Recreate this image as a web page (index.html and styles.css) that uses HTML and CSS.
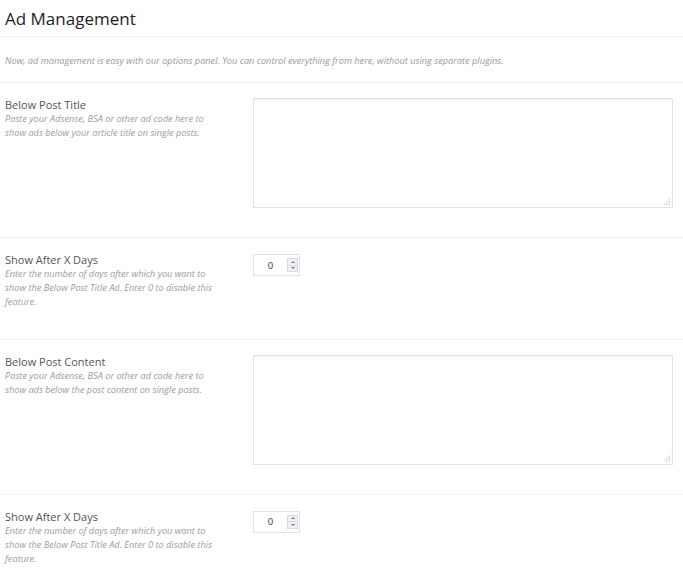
FILE: index.html
```html
<!DOCTYPE html>
<html lang="en">
<head>
<meta charset="UTF-8">
<title>Ad Management</title>
<link rel="stylesheet" href="styles.css">
</head>
<body>
<div class="panel">
    <h2>Ad Management</h2>
    <p class="intro">Now, ad management is easy with our options panel. You can control everything from here, without using separate plugins.</p>

    <div class="row">
        <div class="info">
            <label>Below Post Title</label>
            <p class="desc">Paste your Adsense, BSA or other ad code here to show ads below your article title on single posts.</p>
        </div>
        <div class="field">
            <textarea name="below_title"></textarea>
        </div>
    </div>

    <div class="row">
        <div class="info">
            <label>Show After X Days</label>
            <p class="desc">Enter the number of days after which you want to show the Below Post Title Ad. Enter 0 to disable this feature.</p>
        </div>
        <div class="field">
            <div class="number">
                <input type="text" name="title_days" value="0">
                <span class="spin"><i class="up"></i><i class="down"></i></span>
            </div>
        </div>
    </div>

    <div class="row">
        <div class="info">
            <label>Below Post Content</label>
            <p class="desc">Paste your Adsense, BSA or other ad code here to show ads below the post content on single posts.</p>
        </div>
        <div class="field">
            <textarea name="below_content"></textarea>
        </div>
    </div>

    <div class="row">
        <div class="info">
            <label>Show After X Days</label>
            <p class="desc">Enter the number of days after which you want to show the Below Post Title Ad. Enter 0 to disable this feature.</p>
        </div>
        <div class="field">
            <div class="number">
                <input type="text" name="content_days" value="0">
                <span class="spin"><i class="up"></i><i class="down"></i></span>
            </div>
        </div>
    </div>
</div>
</body>
</html>
```

FILE: styles.css
```css
body {
    margin: 0;
    background: #fff;
    font-family: "Open Sans", "Liberation Sans", Arial, sans-serif;
    color: #555;
}
.panel {
    width: 683px;
}
h2 {
    margin: 0;
    padding: 7px 5px 0;
    height: 29px;
    font-size: 17px;
    font-weight: 400;
    color: #1e1e1e;
    border-bottom: 1px solid #eee;
}
.intro {
    margin: 0;
    padding: 17px 5px 0;
    height: 28px;
    font-size: 9.2px;
    font-style: italic;
    color: #999;
    border-bottom: 1px solid #eee;
}
.row {
    display: flex;
    padding: 15px 0 29px 5px;
    border-bottom: 1px solid #eee;
}
.row:last-child {
    border-bottom: 0;
}
.info {
    width: 212px;
    margin-right: 36px;
}
label {
    display: block;
    font-size: 11px;
    line-height: 14px;
    color: #555;
}
.desc {
    margin: 0;
    font-size: 9.2px;
    line-height: 14.2px;
    font-style: italic;
    color: #9c9c9c;
}
.field {
    position: relative;
}
textarea {
    display: block;
    width: 420px;
    height: 110px;
    box-sizing: border-box;
    border: 1px solid #e2e2e2;
    box-shadow: inset 0 1px 2px rgba(0, 0, 0, .05);
    margin: 0;
    padding: 4px;
    resize: none;
}
/* dotted resize grip drawn over the textarea corner */
.field:has(textarea)::after {
    content: "";
    position: absolute;
    right: 3px;
    top: 100px;
    width: 7px;
    height: 7px;
    background: radial-gradient(circle, #c4c4c4 0.7px, transparent 1px) 0 0 / 2.5px 2.5px;
    clip-path: polygon(100% 0, 100% 100%, 0 100%);
}
.number {
    display: flex;
    align-items: center;
    width: 47px;
    height: 22px;
    box-sizing: border-box;
    border: 1px solid #e2e2e2;
    margin-top: 1px;
}
.number input {
    width: 33px;
    border: 0;
    padding: 0;
    font-family: inherit;
    font-size: 9.5px;
    text-align: center;
    color: #333;
    outline: none;
}
.spin {
    display: flex;
    flex-direction: column;
    width: 11px;
    height: 14px;
    background: #eef0f3;
    border: 1px solid #d8dbe0;
    box-sizing: border-box;
}
.spin i {
    flex: 1;
    display: flex;
    align-items: center;
    justify-content: center;
}
.spin i::after {
    content: "";
    border-left: 2px solid transparent;
    border-right: 2px solid transparent;
}
.spin .up::after {
    border-bottom: 2px solid #6d7a91;
}
.spin .down::after {
    border-top: 2px solid #6d7a91;
}
.spin .up {
    border-bottom: 1px solid #d8dbe0;
}
```
